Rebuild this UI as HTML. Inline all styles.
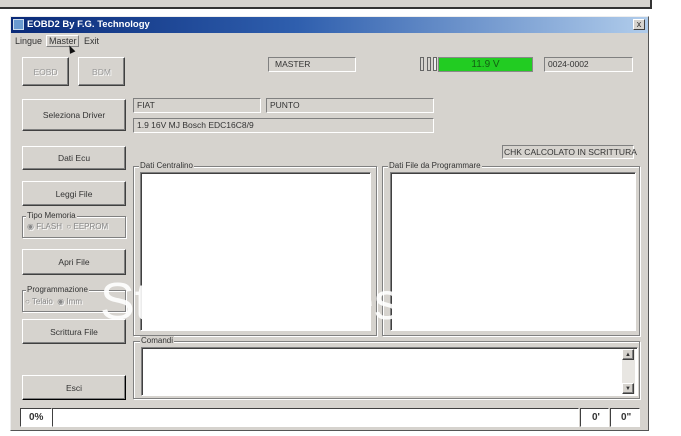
<!DOCTYPE html>
<html><head><meta charset="utf-8"><style>
*{margin:0;padding:0;box-sizing:border-box}
body{width:681px;height:436px;background:#fff;position:relative;overflow:hidden;font-family:"Liberation Sans",sans-serif;font-size:8px;color:#333}
.a{position:absolute}
.btn{position:absolute;background:#d6d3ce;border:1px solid;border-color:#fff #404040 #404040 #fff;box-shadow:inset -1px -1px 0 #808080;display:flex;align-items:center;justify-content:center;font-size:8.5px;color:#333}
.fld{position:absolute;background:#d6d3ce;border:1px solid;border-color:#808080 #fff #fff #808080;font-size:8.5px;padding-left:3px;line-height:12px;white-space:nowrap}
.grp{position:absolute;border:1px solid #808080;box-shadow:1px 1px 0 #fff,inset 1px 1px 0 #fff}
.lbl{position:absolute;background:#d6d3ce;font-size:8px;padding:0 1px;line-height:9px}
.wh{position:absolute;background:#fff;border:1px solid;border-color:#808080 #fff #fff #808080;box-shadow:inset 1px 1px 0 #404040}
.dis{color:#999;text-shadow:1px 1px 0 #fff}
</style></head><body>
<div class="a" style="left:0;top:0;width:652px;height:9px;background:#d6d3ce;border-bottom:2px solid #333;border-right:2px solid #333"></div>
<div class="a" style="left:10px;top:16px;width:639px;height:415px;background:#d6d3ce;border:1px solid;border-color:#eee #555 #555 #eee"></div>
<div class="a" style="left:11px;top:17px;width:637px;height:16px;background:linear-gradient(90deg,#0a2a78,#2f5fae 45%,#b0cceb);"></div>
<div class="a" style="left:13px;top:19px;width:11px;height:11px;background:#6a9ad0;border:1px solid #cde"></div>
<div class="a" style="left:27px;top:19px;color:#fff;font-weight:bold;font-size:9.5px">EOBD2 By F.G. Technology</div>
<div class="a" style="left:633px;top:19px;width:12px;height:11px;background:#d6d3ce;border:1px solid;border-color:#fff #404040 #404040 #fff;font-size:9px;line-height:9px;text-align:center">x</div>
<div class="a" style="left:15px;top:36px;font-size:9px">Lingue</div>
<div class="a" style="left:46px;top:35px;width:33px;height:12px;border:1px solid;border-color:#fff #808080 #808080 #fff"></div>
<div class="a" style="left:49px;top:36px;font-size:9px">Master</div>
<div class="a" style="left:84px;top:36px;font-size:9px">Exit</div>
<div class="a" style="left:68px;top:45px;width:0;height:0;border-left:3px solid transparent;border-right:3px solid transparent;border-bottom:8px solid #111;transform:rotate(-25deg)"></div>

<div class="btn dis" style="left:22px;top:57px;width:47px;height:29px">EOBD</div>
<div class="btn dis" style="left:78px;top:57px;width:47px;height:29px">BDM</div>
<div class="fld" style="left:268px;top:57px;width:88px;height:15px;padding-left:6px">MASTER</div>
<div class="a" style="left:420px;top:57px;width:4px;height:14px;border:1px solid #666"></div>
<div class="a" style="left:427px;top:57px;width:4px;height:14px;border:1px solid #666"></div>
<div class="a" style="left:433px;top:57px;width:4px;height:14px;border:1px solid #666;background:#eee"></div>
<div class="a" style="left:438px;top:57px;width:95px;height:15px;background:#22cc22;border:1px solid #888;text-align:center;font-size:10px;line-height:13px;color:#136013">11.9 V</div>
<div class="fld" style="left:544px;top:57px;width:89px;height:15px">0024-0002</div>

<div class="btn" style="left:22px;top:99px;width:104px;height:32px">Seleziona Driver</div>
<div class="fld" style="left:133px;top:98px;width:128px;height:15px">FIAT</div>
<div class="fld" style="left:266px;top:98px;width:168px;height:15px">PUNTO</div>
<div class="fld" style="left:133px;top:118px;width:301px;height:15px">1.9  16V  MJ Bosch EDC16C8/9</div>
<div class="fld" style="left:502px;top:145px;width:132px;height:14px;padding-left:1px">CHK CALCOLATO IN SCRITTURA</div>

<div class="btn" style="left:22px;top:146px;width:104px;height:24px">Dati Ecu</div>
<div class="btn" style="left:22px;top:181px;width:104px;height:25px">Leggi File</div>
<div class="grp" style="left:22px;top:216px;width:104px;height:22px"></div>
<div class="lbl" style="left:26px;top:211px">Tipo Memoria</div>
<div class="a dis" style="left:27px;top:222px;color:#888">◉ FLASH &nbsp;○ EEPROM</div>
<div class="btn" style="left:22px;top:249px;width:104px;height:26px">Apri File</div>
<div class="grp" style="left:22px;top:290px;width:104px;height:22px"></div>
<div class="lbl" style="left:26px;top:285px">Programmazione</div>
<div class="a dis" style="left:25px;top:297px;color:#888">○ Telaio &nbsp;◉ Imm</div>
<div class="btn" style="left:22px;top:319px;width:104px;height:25px">Scrittura File</div>
<div class="btn" style="left:22px;top:375px;width:104px;height:25px;border-color:#fff #000 #000 #fff">Esci</div>

<div class="grp" style="left:133px;top:166px;width:244px;height:170px"></div>
<div class="lbl" style="left:139px;top:161px">Dati Centralino</div>
<div class="wh" style="left:140px;top:172px;width:231px;height:159px"></div>
<div class="grp" style="left:382px;top:166px;width:258px;height:170px"></div>
<div class="lbl" style="left:388px;top:161px">Dati File da Programmare</div>
<div class="wh" style="left:390px;top:172px;width:246px;height:159px"></div>
<div class="grp" style="left:133px;top:341px;width:507px;height:58px"></div>
<div class="lbl" style="left:140px;top:336px">Comandi</div>
<div class="wh" style="left:141px;top:347px;width:497px;height:49px"></div>
<div class="a" style="left:622px;top:349px;width:13px;height:45px;background:#e8e6e2"></div>
<div class="btn" style="left:622px;top:349px;width:12px;height:11px;font-size:6px">▲</div>
<div class="btn" style="left:622px;top:383px;width:12px;height:11px;font-size:6px">▼</div>

<div class="a" style="left:100px;top:272px;font-size:52px;line-height:60px;color:rgba(255,255,255,0.9)">St</div>
<div class="a" style="left:345px;top:272px;font-size:52px;line-height:60px;color:rgba(255,255,255,0.9)">es</div>

<div class="wh" style="left:20px;top:408px;width:32px;height:19px;box-shadow:none;font-weight:bold;font-size:10px;line-height:17px;padding-left:8px;border-color:#404040 #fff #fff #404040">0%</div>
<div class="wh" style="left:52px;top:408px;width:527px;height:19px;box-shadow:none;border-color:#404040 #fff #fff #404040"></div>
<div class="wh" style="left:580px;top:408px;width:29px;height:19px;box-shadow:none;font-weight:bold;font-size:10px;line-height:17px;padding-left:11px;border-color:#404040 #fff #fff #404040">0'</div>
<div class="wh" style="left:610px;top:408px;width:30px;height:19px;box-shadow:none;font-weight:bold;font-size:10px;line-height:17px;padding-left:10px;border-color:#404040 #fff #fff #404040">0"</div>
</body></html>
